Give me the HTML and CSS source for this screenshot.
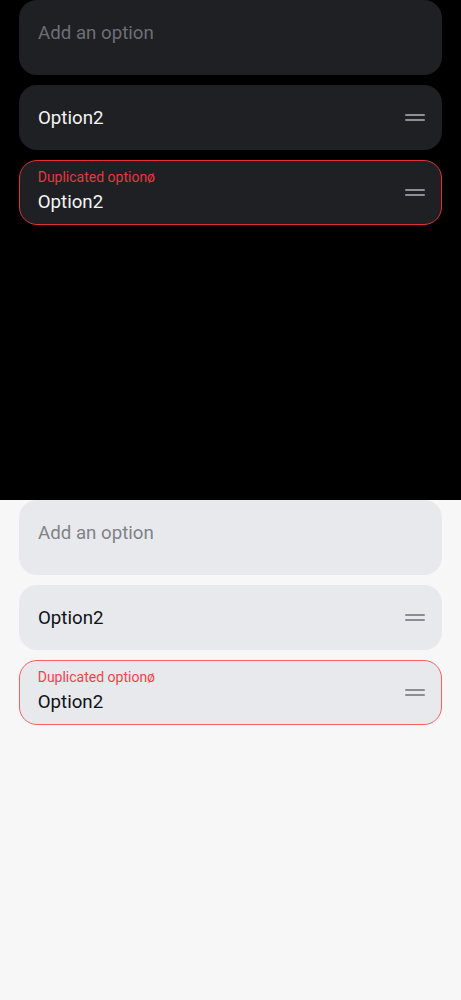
FILE: index.html
```html
<!DOCTYPE html>
<html>
<head>
<meta charset="utf-8">
<link rel="stylesheet" href="styles.css">
</head>
<body>
<section class="pane dark">
  <div class="field add"><span class="placeholder">Add an option</span></div>
  <div class="field item">
    <span class="value">Option2</span>
    <span class="handle"><i></i><i></i></span>
  </div>
  <div class="field item error">
    <div class="stack">
      <span class="label">Duplicated optionø</span>
      <span class="value">Option2</span>
    </div>
    <span class="handle"><i></i><i></i></span>
  </div>
</section>
<section class="pane light">
  <div class="field add"><span class="placeholder">Add an option</span></div>
  <div class="field item">
    <span class="value">Option2</span>
    <span class="handle"><i></i><i></i></span>
  </div>
  <div class="field item error">
    <div class="stack">
      <span class="label">Duplicated optionø</span>
      <span class="value">Option2</span>
    </div>
    <span class="handle"><i></i><i></i></span>
  </div>
</section>
</body>
</html>
```
FILE: styles.css
```css
* { box-sizing: border-box; }
html, body { margin: 0; padding: 0; }
body { font-family: Roboto, "Noto Sans", sans-serif; width: 461px; }

.pane {
  height: 500px;
  padding: 0 19px;
  display: flex;
  flex-direction: column;
  gap: 10px;
}
.dark { background: #000; }
.light { background: #f7f7f7; }

.field {
  border-radius: 18px;
  display: flex;
  align-items: center;
  padding: 0 17px 0 19px;
}
.dark .field { background: #1f2024; }
.light .field { background: #e8e9ed; }

.add {
  height: 75px;
  align-items: flex-start;
  padding-top: 20.8px;
}
.item { height: 65px; justify-content: space-between; }

.placeholder, .value {
  font-size: 18.7px;
  line-height: 24px;
}
.dark .placeholder { color: #6c6f76; }
.light .placeholder { color: #7f8289; }
.dark .value { color: #f4f4f5; }
.light .value { color: #111214; }

.error { border: 1.3px solid; padding-left: 17.7px; padding-right: 15.7px; }
.dark .error { border-color: #e2303b; }
.light .error { border-color: #ff5b64; }

.stack {
  display: flex;
  flex-direction: column;
  align-self: flex-start;
  padding-top: 7.2px;
}
.label { font-size: 14px; line-height: 18px; margin-bottom: 3.5px; }
.dark .label { color: #e8363f; }
.light .label { color: #f5414b; }

.handle {
  width: 20px;
  display: flex;
  flex-direction: column;
  gap: 2.2px;
}
.handle i { display: block; height: 2.3px; border-radius: 1px; }
.dark .handle i { background: #8c8f96; }
.light .handle i { background: #8a8d93; }
```
